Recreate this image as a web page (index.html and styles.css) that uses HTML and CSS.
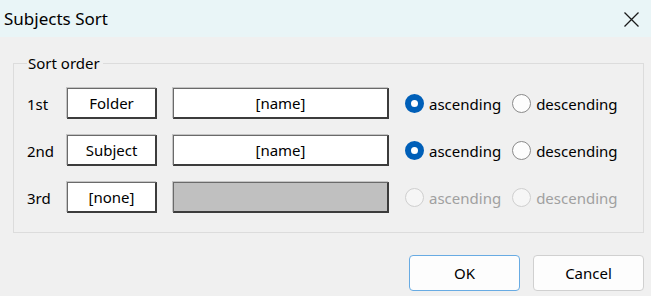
FILE: index.html
```html
<!DOCTYPE html>
<html lang="en">
<head>
    <meta charset="UTF-8">
    <title>Subjects Sort</title>
    <link rel="stylesheet" href="styles.css">
</head>
<body>
    <div class="dialog">
        <!-- Title bar -->
        <div class="titlebar">
            <span class="title">Subjects Sort</span>
            <span class="close">
                <svg width="15" height="15" viewBox="0 0 15 15">
                    <path d="M0.5 0.5 L14.5 14.5 M14.5 0.5 L0.5 14.5" stroke="#1a1a1a" stroke-width="1.3" fill="none"/>
                </svg>
            </span>
        </div>

        <div class="content">
            <fieldset class="group">
                <legend>Sort order</legend>

                <div class="sort-row">
                    <span class="rank">1st</span>
                    <span class="field">Folder</span>
                    <span class="name">[name]</span>
                    <label class="option"><span class="radio checked"></span>ascending</label>
                    <label class="option"><span class="radio"></span>descending</label>
                </div>

                <div class="sort-row">
                    <span class="rank">2nd</span>
                    <span class="field">Subject</span>
                    <span class="name">[name]</span>
                    <label class="option"><span class="radio checked"></span>ascending</label>
                    <label class="option"><span class="radio"></span>descending</label>
                </div>

                <div class="sort-row">
                    <span class="rank">3rd</span>
                    <span class="field">[none]</span>
                    <span class="name empty"></span>
                    <label class="option disabled"><span class="radio"></span>ascending</label>
                    <label class="option disabled"><span class="radio"></span>descending</label>
                </div>
            </fieldset>

            <div class="buttons">
                <button class="btn default">OK</button>
                <button class="btn">Cancel</button>
            </div>
        </div>
    </div>
</body>
</html>
```

FILE: styles.css
```css
body {
    margin: 0;
    font-family: "Noto Sans", sans-serif;
    font-size: 15px;
    color: #000;
    background-color: #f0f0f0;
}

.dialog {
    width: 651px;
    height: 296px;
    background-color: #f0f0f0;
}

.titlebar {
    height: 37px;
    background-color: #e9f5f7;
    display: flex;
    align-items: center;
    justify-content: space-between;
    padding: 0 12px 0 4px;
}

.title {
    font-size: 17px;
    line-height: 20px;
}

.close {
    display: flex;
    margin-top: 1px;
}

.content {
    padding: 17px 7px 0 13px;
}

.group {
    margin: 0;
    padding: 16px 0 19px 13px;
    border: 1px solid #dcdcdc;
    min-width: 0;
    display: flex;
    flex-direction: column;
    gap: 16px;
}

.group legend {
    padding: 0 3px 0 1px;
    margin-left: 0;
    line-height: 18px;
}

.sort-row {
    display: flex;
    align-items: center;
    height: 31px;
}

.rank {
    width: 40px;
}

.field,
.name {
    box-sizing: border-box;
    height: 31px;
    background-color: #fff;
    border: 1px solid #6a6a6a;
    border-right: 2px solid #3c3c3c;
    border-bottom: 2px solid #3c3c3c;
    box-shadow: -1px -1px 0 #c4c4c4;
    display: flex;
    align-items: center;
    justify-content: center;
}

.field {
    width: 90px;
}

.name {
    width: 216px;
    margin-left: 16px;
    margin-right: 16px;
}

.name.empty {
    background-color: #c0c0c0;
}

.option {
    display: flex;
    align-items: center;
    margin-right: 11px;
}

.radio {
    box-sizing: border-box;
    width: 19px;
    height: 19px;
    border-radius: 50%;
    border: 1px solid #8a8a8a;
    background-color: #fdfdfd;
    margin-right: 5px;
}

.radio.checked {
    border: 6px solid #005fb8;
    background-color: #fff;
}

.option.disabled {
    color: #a0a0a0;
}

.option.disabled .radio {
    border-color: #cfcfcf;
    background-color: #f6f6f6;
}

.buttons {
    display: flex;
    justify-content: flex-end;
    gap: 13px;
    margin-top: 22px;
}

.btn {
    width: 111px;
    height: 36px;
    font-family: "Noto Sans", sans-serif;
    font-size: 15px;
    color: #000;
    background-color: #fdfdfd;
    border: 1px solid #d0d0d0;
    border-radius: 4px;
    padding: 0;
}

.btn.default {
    border-color: #68abe3;
}
```
